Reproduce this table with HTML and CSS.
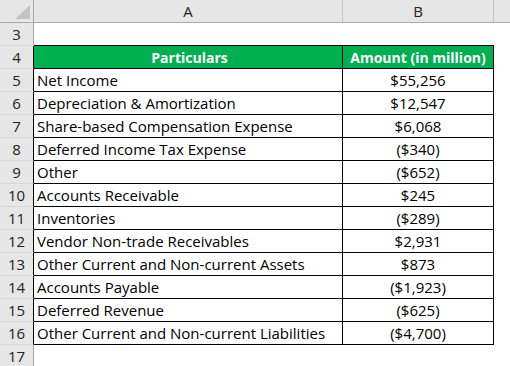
FILE: index.html
```
<!DOCTYPE html>
<html>
<head>
<meta charset="utf-8">
<link rel="stylesheet" href="styles.css">
</head>
<body>
<div class="sheet">
  <div class="corner"><svg class="tri" width="33" height="22" viewBox="0 0 33 22"><polygon points="15,19 30,19 30,5" fill="#c3c3c3"/></svg></div>
  <div class="ch">A</div>
  <div class="ch">B</div>
  <div class="ch last"></div>

  <div class="rh">3</div>
  <div class="c pre"></div>
  <div class="c pre"></div>
  <div class="c"></div>

  <div class="rh t">4</div>
  <div class="c a head">Particulars</div>
  <div class="c b head">Amount (in million)</div>
  <div class="c"></div>

  <div class="rh t">5</div><div class="c a">Net Income</div><div class="c b">$55,256</div><div class="c"></div>
  <div class="rh t">6</div><div class="c a">Depreciation &amp; Amortization</div><div class="c b">$12,547</div><div class="c"></div>
  <div class="rh t">7</div><div class="c a">Share-based Compensation Expense</div><div class="c b">$6,068</div><div class="c"></div>
  <div class="rh t">8</div><div class="c a">Deferred Income Tax Expense</div><div class="c b">($340)</div><div class="c"></div>
  <div class="rh t">9</div><div class="c a">Other</div><div class="c b">($652)</div><div class="c"></div>
  <div class="rh t">10</div><div class="c a">Accounts Receivable</div><div class="c b">$245</div><div class="c"></div>
  <div class="rh t">11</div><div class="c a">Inventories</div><div class="c b">($289)</div><div class="c"></div>
  <div class="rh t">12</div><div class="c a">Vendor Non-trade Receivables</div><div class="c b">$2,931</div><div class="c"></div>
  <div class="rh t">13</div><div class="c a">Other Current and Non-current Assets</div><div class="c b">$873</div><div class="c"></div>
  <div class="rh t">14</div><div class="c a">Accounts Payable</div><div class="c b">($1,923)</div><div class="c"></div>
  <div class="rh t">15</div><div class="c a">Deferred Revenue</div><div class="c b">($625)</div><div class="c"></div>
  <div class="rh t">16</div><div class="c a">Other Current and Non-current Liabilities</div><div class="c b">($4,700)</div><div class="c"></div>

  <div class="rh">17</div>
  <div class="c"></div>
  <div class="c"></div>
  <div class="c"></div>
</div>
</body>
</html>
```
FILE: styles.css
```
html, body {
  margin: 0;
  padding: 0;
  background: #ffffff;
  overflow: hidden;
}
.sheet {
  display: grid;
  grid-template-columns: 34px 309px 151px 1fr;
  grid-auto-rows: 23px;
  width: 510px;
  font-family: "Open Sans", "Noto Sans", sans-serif;
  font-size: 15px;
  color: #000;
}
.sheet > div {
  box-sizing: border-box;
  padding-top: 1px;
  line-height: 21px;
  white-space: nowrap;
  overflow: hidden;
}
.corner {
  background: #e6e6e6;
  border-right: 1px solid #ababab;
  border-bottom: 1px solid #ababab;
  position: relative;
}
.tri {
  position: absolute;
  left: 0;
  top: 0;
}
.ch {
  background: #e6e6e6;
  border-right: 1px solid #c6c6c6;
  border-bottom: 1px solid #ababab;
  text-align: center;
  color: #222;
}
.ch.last {
  border-right: none;
}
.rh {
  background: #e6e6e6;
  border-right: 1px solid #ababab;
  border-bottom: 1px solid #d8d8d8;
  text-align: center;
  color: #222;
}
.rh.t {
  border-right-color: #000;
}
.c.pre {
  border-bottom: 1px solid #000;
}
.c.a {
  padding-left: 3px;
  border-right: 1px solid #000;
  border-bottom: 1px solid #000;
}
.c.b {
  text-align: center;
  border-right: 1px solid #000;
  border-bottom: 1px solid #000;
}
.c.b.head, .c.a.head {
  background: #00b050;
  color: #ffffff;
  font-size: 14px;
  font-weight: 700;
  text-align: center;
}
```
